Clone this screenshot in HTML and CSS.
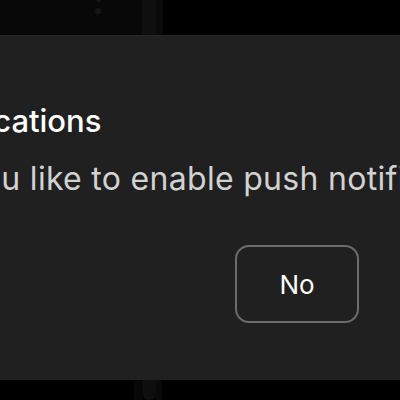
FILE: index.html
```html
<!DOCTYPE html>
<html lang="en">
<head>
<meta charset="utf-8">
<title>Notifications</title>
<link rel="stylesheet" href="styles.css">
</head>
<body>
<div class="screen">
  <div class="backdrop-top">
    <div class="bg-panel">
      <span class="dot dot-a"></span>
      <span class="dot dot-b"></span>
    </div>
    <div class="bg-col"></div>
    <div class="bg-col-edge"></div>
  </div>
  <div class="dialog">
    <h2 class="dialog-title">Notifications</h2>
    <p class="dialog-text">Would you like to enable push notifications?</p>
    <div class="dialog-actions">
      <button class="btn">No</button>
    </div>
  </div>
  <div class="backdrop-bottom">
    <div class="bb-spacer"></div>
    <div class="bb-left"></div>
    <div class="bb-col"></div>
    <div class="bb-edge"></div>
  </div>
</div>
</body>
</html>
```
FILE: styles.css
```css
* { box-sizing: border-box; }
html, body {
  margin: 0;
  padding: 0;
  background: #000;
}
.screen {
  width: 400px;
  height: 400px;
  overflow: hidden;
  display: flex;
  flex-direction: column;
  font-family: Inter, "Liberation Sans", Arial, sans-serif;
}
.backdrop-top {
  height: 35px;
  display: flex;
  flex: none;
}
.bg-panel {
  width: 142px;
  background: #080808;
  position: relative;
}
.dot {
  position: absolute;
  width: 6px;
  height: 6px;
  border-radius: 50%;
  background: #161616;
}
.dot-a { left: 95px; top: 8px; }
.dot-b { left: 96px; top: -3px; width: 5px; height: 5px; }
.bg-col { width: 14px; background: #0f0f0f; }
.bg-col-edge { width: 7px; background: #0a0a0a; }

.dialog {
  height: 345px;
  flex: none;
  background: #202020;
  border-top: 1px solid #262626;
  padding-top: 67px;
  display: flex;
  flex-direction: column;
  overflow: hidden;
}
.dialog-title {
  margin: 0 0 0 -87px;
  font-size: 31px;
  line-height: 36px;
  font-weight: 500;
  color: #ffffff;
  white-space: nowrap;
}
.dialog-text {
  margin: 20px 0 0 -142px;
  font-size: 32px;
  line-height: 40px;
  font-weight: 400;
  letter-spacing: 0.3px;
  color: #d2d2d2;
  white-space: nowrap;
}
.dialog-actions {
  display: flex;
  justify-content: flex-end;
  padding-right: 41px;
  margin-top: 46px;
}
.btn {
  width: 124px;
  height: 78px;
  border: 2px solid #6b6b6b;
  border-radius: 14px;
  background: transparent;
  color: #ffffff;
  font-family: Inter, "Liberation Sans", Arial, sans-serif;
  font-size: 26px;
  padding: 0;
}
.backdrop-bottom {
  flex: 1;
  display: flex;
}
.bb-spacer { width: 134px; }
.bb-left { width: 9px; background: #070707; }
.bb-col { width: 13px; background: #0e0e0e; border-radius: 0 0 6px 6px; }
.bb-edge { width: 6px; background: #090909; }
```
